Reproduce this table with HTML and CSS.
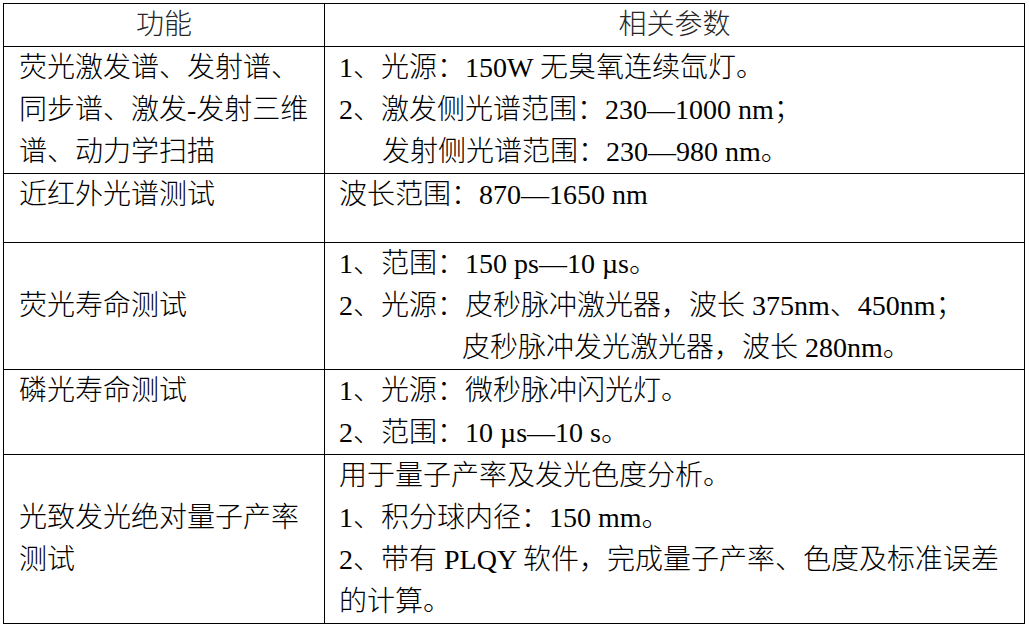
FILE: index.html
```
<!DOCTYPE html>
<html lang="zh-CN">
<head>
<meta charset="utf-8">
<title>功能与相关参数</title>
<link rel="stylesheet" href="styles.css">
</head>
<body>
<table class="spec">
  <colgroup>
    <col class="col-func">
    <col class="col-param">
  </colgroup>
  <thead>
    <tr class="row-head">
      <th>功能</th>
      <th>相关参数</th>
    </tr>
  </thead>
  <tbody>
    <tr class="row-a">
      <td class="func">荧光激发谱、发射谱、同步谱、激发-发射三维谱、动力学扫描</td>
      <td class="param">
        <span class="line">1、光源：150W 无臭氧连续氙灯。</span>
        <span class="line">2、激发侧光谱范围：230—1000 nm；</span>
        <span class="line indent-2">发射侧光谱范围：230—980 nm。</span>
      </td>
    </tr>
    <tr class="row-b">
      <td class="func">近红外光谱测试</td>
      <td class="param"><span class="line">波长范围：870—1650 nm</span></td>
    </tr>
    <tr class="row-c">
      <td class="func mid">荧光寿命测试</td>
      <td class="param">
        <span class="line">1、范围：150 ps—10 µs。</span>
        <span class="line">2、光源：皮秒脉冲激光器，波长 375nm、450nm；</span>
        <span class="line indent-5">皮秒脉冲发光激光器，波长 280nm。</span>
      </td>
    </tr>
    <tr class="row-d">
      <td class="func">磷光寿命测试</td>
      <td class="param">
        <span class="line">1、光源：微秒脉冲闪光灯。</span>
        <span class="line">2、范围：10 µs—10 s。</span>
      </td>
    </tr>
    <tr class="row-e">
      <td class="func mid">光致发光绝对量子产率测试</td>
      <td class="param">
        <span class="line">用于量子产率及发光色度分析。</span>
        <span class="line">1、积分球内径：150 mm。</span>
        <span class="line">2、带有 PLQY 软件，完成量子产率、色度及标准误差</span>
        <span class="line">的计算。</span>
      </td>
    </tr>
  </tbody>
</table>
</body>
</html>
```
FILE: styles.css
```
html, body {
  margin: 0;
  padding: 0;
  background: #fff;
}

body {
  padding: 3px 0 0 3px;
  font-family: "Liberation Serif", "Noto Sans CJK SC", serif;
  font-size: 28px;
  font-weight: 300;
  color: #000;
}

.spec {
  border-collapse: collapse;
  table-layout: fixed;
  width: 1021px;
}

.col-func { width: 321px; }
.col-param { width: 700px; }

.spec th,
.spec td {
  border: 1px solid #000;
  padding: 0 0 0 14px;
  line-height: 42px;
  vertical-align: top;
  text-align: left;
}

.spec th {
  font-weight: 300;
  text-align: center;
  padding: 0;
  color: #262626;
}

.spec td.func { padding-left: 15px; padding-right: 10px; }
.spec td.mid { vertical-align: middle; }

.line {
  display: block;
  white-space: nowrap;
}

.indent-2 { padding-left: 43px; }
.indent-5 { padding-left: 123px; }

.row-head { height: 43px; }
.row-a { height: 126px; }
.row-b { height: 69px; }
.row-c { height: 125px; }
.row-d { height: 85px; }
.row-e { height: 168px; }
```
